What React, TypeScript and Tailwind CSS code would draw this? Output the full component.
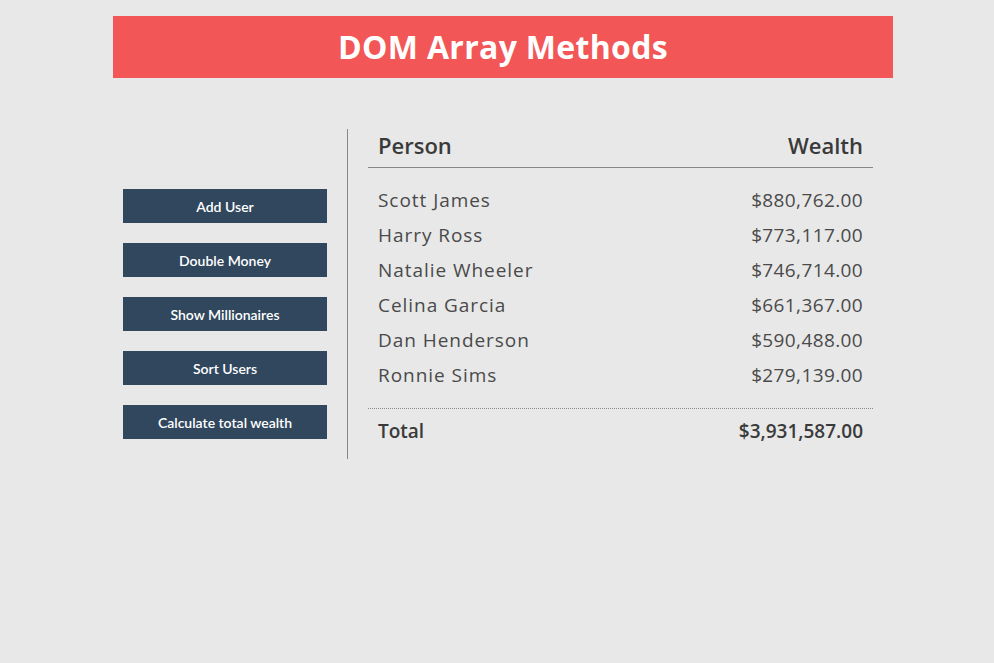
const users = [
  { name: "Scott James", wealth: "$880,762.00" },
  { name: "Harry Ross", wealth: "$773,117.00" },
  { name: "Natalie Wheeler", wealth: "$746,714.00" },
  { name: "Celina Garcia", wealth: "$661,367.00" },
  { name: "Dan Henderson", wealth: "$590,488.00" },
  { name: "Ronnie Sims", wealth: "$279,139.00" },
];

const actions = [
  "Add User",
  "Double Money",
  "Show Millionaires",
  "Sort Users",
  "Calculate total wealth",
];

export default function App() {
  return (
    <div
      className="min-h-screen bg-[#e8e8e8] text-[#333] pt-[16px]"
      style={{ fontFamily: "Lato, 'Noto Sans', sans-serif" }}
    >
      <h1 className="ml-[113px] w-[780px] h-[62px] bg-[#f25656] text-white text-[32px] font-bold tracking-[0.01em] flex items-center justify-center font-['Open_Sans',sans-serif]">
        DOM Array Methods
      </h1>

      <div className="ml-[113px] w-[780px] mt-[51px] h-[330px] flex">
        {/* Buttons */}
        <aside className="w-[235px] border-r border-[#888] pl-[10px] pr-[20px] pt-[60px] flex flex-col gap-[20px]">
          {actions.map((a) => (
            <button
              key={a}
              className="w-[204px] h-[34px] bg-[#30475e] text-white text-[14px] font-semibold"
            >
              {a}
            </button>
          ))}
        </aside>

        {/* Table */}
        <main className="flex-1 px-[20px] font-['Open_Sans',sans-serif]">
          <h2 className="h-[39px] pb-[6px] flex items-center justify-between px-[10px] border-b border-[#888] text-[22px] font-semibold text-[#3a3a3a]">
            <span>Person</span>
            <span>Wealth</span>
          </h2>
          <div className="mt-[15px] text-[#4a4a4a]">
            {users.map((u) => (
              <div
                key={u.name}
                className="h-[35px] flex items-center justify-between px-[10px] text-[19px] font-normal"
              >
                <span className="tracking-[0.05em]">{u.name}</span>
                <span className="tracking-[0.02em]">{u.wealth}</span>
              </div>
            ))}
          </div>
          <div className="mt-[15px] border-t border-dotted border-[#888] h-[46px] flex items-center justify-between px-[10px] text-[19px] font-semibold text-[#3a3a3a]">
            <span>Total</span>
            <span>$3,931,587.00</span>
          </div>
        </main>
      </div>
    </div>
  );
}
